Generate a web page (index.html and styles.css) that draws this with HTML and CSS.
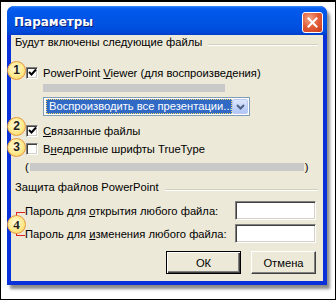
FILE: index.html
```html
<!DOCTYPE html>
<html lang="ru">
<head>
  <meta charset="UTF-8" />
  <title>Параметры</title>
  <link rel="stylesheet" href="styles.css">
</head>
<body>
  <div class="frame">
    <div class="window">
      <div class="titlebar">
        <span class="title">Параметры</span>
        <span class="close">
          <svg width="11" height="11" viewBox="0 0 11 11"><path d="M1.5 1.5 L9.5 9.5 M9.5 1.5 L1.5 9.5" stroke="#fff" stroke-width="2" stroke-linecap="square"/></svg>
        </span>
      </div>
      <div class="content">
        <div class="group-head"><span>Будут включены следующие файлы</span><span class="rule"></span></div>

        <div class="check-row first">
          <span class="box"><svg width="9" height="9" viewBox="0 0 9 9"><path d="M1 4 L3.5 6.5 L8 1.5" fill="none" stroke="#000" stroke-width="2"/></svg></span>
          <span>PowerPoint <u>V</u>iewer (для воспроизведения)</span>
        </div>
        <div class="gray-bar short"></div>
        <div class="combo">
          <span class="combo-value"><span class="selected">Воспроизводить все презентации...</span></span>
          <span class="combo-btn">
            <svg width="9" height="6" viewBox="0 0 9 6"><path d="M1 1 L4.5 4.5 L8 1" fill="none" stroke="#4d6185" stroke-width="2"/></svg>
          </span>
        </div>

        <div class="check-row second">
          <span class="box"><svg width="9" height="9" viewBox="0 0 9 9"><path d="M1 4 L3.5 6.5 L8 1.5" fill="none" stroke="#000" stroke-width="2"/></svg></span>
          <span><u>С</u>вязанные файлы</span>
        </div>
        <div class="check-row third">
          <span class="box"></span>
          <span>В<u>н</u>едренные шрифты TrueType</span>
        </div>
        <div class="paren-row">
          <span>(</span><span class="gray-bar long"></span><span>)</span>
        </div>

        <div class="group-head second-head"><span>Защита файлов PowerPoint</span><span class="rule"></span></div>

        <div class="pass-row first-pass">
          <span>Пароль для <u>о</u>ткрытия любого файла:</span>
          <span class="field"></span>
        </div>
        <div class="pass-row">
          <span>Пароль для <u>и</u>зменения любого файла:</span>
          <span class="field"></span>
        </div>

        <div class="buttons">
          <span class="btn default">ОК</span>
          <span class="btn cancel">Отмена</span>
        </div>
      </div>
    </div>

    <span class="bracket"></span>
    <span class="callout c1">1</span>
    <span class="callout c2">2</span>
    <span class="callout c3">3</span>
    <span class="callout c4">4</span>
  </div>
</body>
</html>
```

FILE: styles.css
```css
* {
  box-sizing: border-box;
}
body {
  margin: 0;
  background: #fff;
  font-family: "Liberation Sans", Arial, sans-serif;
  font-size: 11.2px;
  color: #000;
}
.frame {
  position: relative;
  width: 336px;
  height: 300px;
  border: 1px solid #000;
  border-top-width: 2px;
  padding: 4px 0 0 6px;
}
.window {
  width: 320px;
  height: 279px;
  border-radius: 7px 7px 0 0;
  background: #0831d9;
  padding: 0 4px 4px 4px;
  box-shadow: 3px 4px 3px rgba(0, 0, 0, 0.45);
}
.titlebar {
  display: flex;
  align-items: center;
  justify-content: space-between;
  height: 29px;
  margin: 0 -4px;
  padding: 3px 4px 0 7px;
  border-radius: 7px 7px 0 0;
  background: linear-gradient(#3d8ffa 0, #0a5ff0 2px, #0058ea 6px, #0054e4 14px, #004fdf 22px, #0048d8 26px, #003ec9 29px);
}
.title {
  color: #fff;
  font-family: "DejaVu Sans", sans-serif;
  font-weight: bold;
  font-size: 12px;
  text-shadow: 1px 1px #0a1f7c;
}
.close {
  display: flex;
  align-items: center;
  justify-content: center;
  width: 21px;
  height: 21px;
  border: 1px solid #fff;
  border-radius: 3px;
  background: radial-gradient(circle at 35% 30%, #f3a68a 0, #e4603a 45%, #c8391b 100%);
}
.content {
  height: 246px;
  background: #ece9d8;
}
.group-head {
  display: flex;
  align-items: center;
  height: 14px;
  padding: 0 5px 0 4px;
  white-space: nowrap;
}
.group-head .rule {
  flex: 1;
  height: 2px;
  margin: 6px 0 0 6px;
  border-top: 1px solid #d0d0bf;
  border-bottom: 1px solid #fff;
}
.check-row {
  display: flex;
  align-items: center;
  height: 15px;
  padding-left: 15px;
  white-space: nowrap;
}
.check-row.first {
  margin-top: 16px;
}
.check-row.second {
  margin-top: 7px;
}
.check-row.third {
  margin-top: 3px;
}
.box {
  display: flex;
  align-items: center;
  justify-content: center;
  width: 12px;
  height: 12px;
  margin-right: 5px;
  background: #fff;
  border: 1px solid;
  border-color: #808080 #fff #fff #808080;
  box-shadow: inset 1px 1px #404040, inset -1px -1px #d4d0c8;
}
.gray-bar {
  display: block;
  height: 8px;
  background: #c9c9c9;
}
.gray-bar.short {
  width: 182px;
  margin: 4px 0 0 32px;
}
.combo {
  display: flex;
  align-items: center;
  width: 207px;
  height: 19px;
  margin: 5px 0 0 32px;
  padding: 1px;
  background: #fff;
  border: 1px solid #7f9db9;
}
.combo-value {
  flex: 1;
  padding-left: 1px;
}
.selected {
  display: block;
  width: 186px;
  height: 15px;
  line-height: 13px;
  padding-left: 2px;
  color: #fff;
  background: #316ac5;
  border: 1px dotted #f7d56a;
  white-space: nowrap;
}
.combo-btn {
  display: flex;
  align-items: center;
  justify-content: center;
  width: 16px;
  height: 15px;
  border: 1px solid #b9c9ef;
  border-radius: 2px;
  background: linear-gradient(#dde6fd, #c1d2f9 60%, #b2c5f5);
}
.paren-row {
  display: flex;
  align-items: center;
  height: 14px;
  margin-top: 4px;
  padding-left: 14px;
}
.gray-bar.long {
  width: 274px;
  margin: 0 1px 0 1px;
}
.second-head {
  margin-top: 6px;
}
.pass-row {
  display: flex;
  align-items: center;
  justify-content: space-between;
  height: 19px;
  margin-top: 4px;
  padding: 0 7px 0 14px;
  white-space: nowrap;
}
.pass-row.first-pass {
  margin-top: 7px;
}
.field {
  width: 81px;
  height: 19px;
  background: #fff;
  border: 1px solid;
  border-color: #808080 #fff #fff #808080;
  box-shadow: inset 1px 1px #404040, inset -1px -1px #d4d0c8;
}
.buttons {
  display: flex;
  justify-content: flex-end;
  gap: 10px;
  margin-top: 8px;
  padding-right: 7px;
}
.btn {
  display: flex;
  align-items: center;
  justify-content: center;
  height: 23px;
  background: #ece9d8;
  border: 1px solid;
  border-color: #fff #404040 #404040 #fff;
  box-shadow: inset -1px -1px #808080;
}
.btn.default {
  width: 75px;
  border: 1px solid #000;
  box-shadow: inset 1px 1px #fff, inset -1px -1px #404040, inset -2px -2px #808080;
}
.btn.cancel {
  width: 65px;
}
.callout {
  position: absolute;
  left: 6px;
  width: 19px;
  height: 19px;
  border: 1px solid #e89a3c;
  border-radius: 50%;
  background: radial-gradient(circle at 45% 40%, #fffbe0 0, #ffe98a 55%, #fbc85a 100%);
  color: #222;
  font-family: "Liberation Sans", Arial, sans-serif;
  font-weight: bold;
  font-size: 12px;
  line-height: 17px;
  text-align: center;
}
.callout.c1 { top: 59px; }
.callout.c2 { top: 115px; }
.callout.c3 { top: 136px; }
.callout.c4 {
  top: 213px;
  font-family: "Liberation Serif", serif;
  font-size: 13px;
}
.bracket {
  position: absolute;
  left: 15px;
  top: 210px;
  width: 9px;
  height: 24px;
  border: 1px solid #e4201c;
  border-right: none;
}
```
